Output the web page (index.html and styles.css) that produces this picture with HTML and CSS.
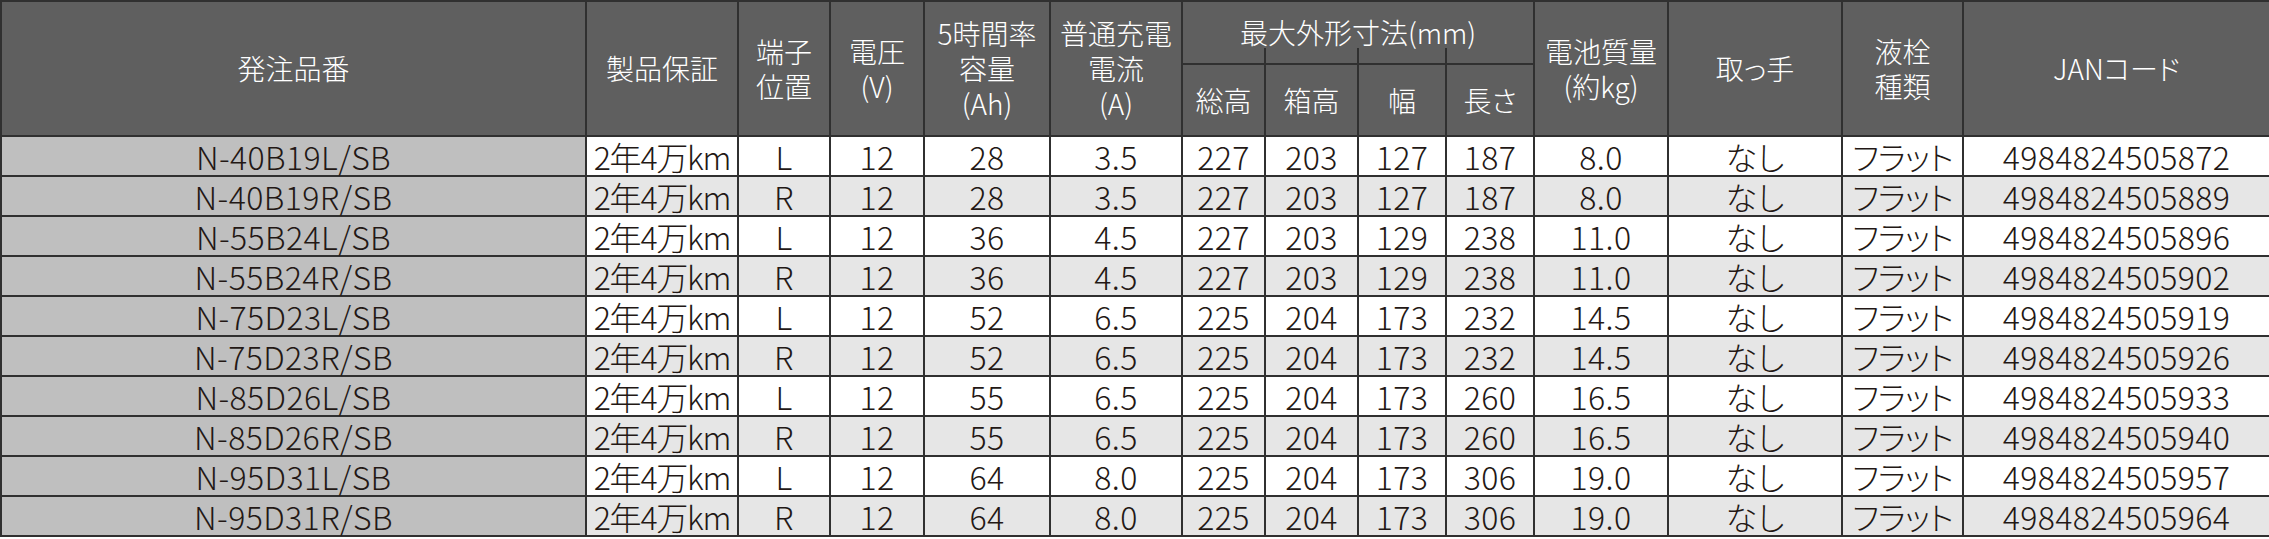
FILE: index.html
```html
<!DOCTYPE html>
<html lang="ja">
<head>
<meta charset="utf-8">
<title>バッテリー仕様表</title>
<link rel="stylesheet" href="styles.css">
</head>
<body>
<table class="spec">
  <colgroup>
    <col class="w-code"><col class="w-warranty"><col class="w-term"><col class="w-volt"><col class="w-cap"><col class="w-cur">
    <col class="w-d1"><col class="w-d2"><col class="w-d3"><col class="w-d4"><col class="w-mass"><col class="w-handle"><col class="w-plug"><col class="w-jan">
  </colgroup>
  <thead>
    <tr class="h1">
      <th rowspan="2">発注品番</th>
      <th rowspan="2">製品保証</th>
      <th rowspan="2">端子<br>位置</th>
      <th rowspan="2">電圧<br>(V)</th>
      <th rowspan="2">5時間率<br>容量<br>(Ah)</th>
      <th rowspan="2">普通充電<br>電流<br>(A)</th>
      <th colspan="4">最大外形寸法(mm)</th>
      <th rowspan="2">電池質量<br>(約kg)</th>
      <th rowspan="2">取っ手</th>
      <th rowspan="2">液栓<br>種類</th>
      <th rowspan="2">JANコード</th>
    </tr>
    <tr class="h2">
      <th class="sub">総高</th>
      <th class="sub tick">箱高</th>
      <th class="sub tick">幅</th>
      <th class="sub tick">長さ</th>
    </tr>
  </thead>
  <tbody>
    <tr><td class="code">N-40B19L/SB</td><td>2年4万km</td><td>L</td><td>12</td><td>28</td><td>3.5</td><td>227</td><td>203</td><td>127</td><td>187</td><td>8.0</td><td>なし</td><td>フラット</td><td>4984824505872</td></tr>
    <tr><td class="code">N-40B19R/SB</td><td>2年4万km</td><td>R</td><td>12</td><td>28</td><td>3.5</td><td>227</td><td>203</td><td>127</td><td>187</td><td>8.0</td><td>なし</td><td>フラット</td><td>4984824505889</td></tr>
    <tr><td class="code">N-55B24L/SB</td><td>2年4万km</td><td>L</td><td>12</td><td>36</td><td>4.5</td><td>227</td><td>203</td><td>129</td><td>238</td><td>11.0</td><td>なし</td><td>フラット</td><td>4984824505896</td></tr>
    <tr><td class="code">N-55B24R/SB</td><td>2年4万km</td><td>R</td><td>12</td><td>36</td><td>4.5</td><td>227</td><td>203</td><td>129</td><td>238</td><td>11.0</td><td>なし</td><td>フラット</td><td>4984824505902</td></tr>
    <tr><td class="code">N-75D23L/SB</td><td>2年4万km</td><td>L</td><td>12</td><td>52</td><td>6.5</td><td>225</td><td>204</td><td>173</td><td>232</td><td>14.5</td><td>なし</td><td>フラット</td><td>4984824505919</td></tr>
    <tr><td class="code">N-75D23R/SB</td><td>2年4万km</td><td>R</td><td>12</td><td>52</td><td>6.5</td><td>225</td><td>204</td><td>173</td><td>232</td><td>14.5</td><td>なし</td><td>フラット</td><td>4984824505926</td></tr>
    <tr><td class="code">N-85D26L/SB</td><td>2年4万km</td><td>L</td><td>12</td><td>55</td><td>6.5</td><td>225</td><td>204</td><td>173</td><td>260</td><td>16.5</td><td>なし</td><td>フラット</td><td>4984824505933</td></tr>
    <tr><td class="code">N-85D26R/SB</td><td>2年4万km</td><td>R</td><td>12</td><td>55</td><td>6.5</td><td>225</td><td>204</td><td>173</td><td>260</td><td>16.5</td><td>なし</td><td>フラット</td><td>4984824505940</td></tr>
    <tr><td class="code">N-95D31L/SB</td><td>2年4万km</td><td>L</td><td>12</td><td>64</td><td>8.0</td><td>225</td><td>204</td><td>173</td><td>306</td><td>19.0</td><td>なし</td><td>フラット</td><td>4984824505957</td></tr>
    <tr><td class="code">N-95D31R/SB</td><td>2年4万km</td><td>R</td><td>12</td><td>64</td><td>8.0</td><td>225</td><td>204</td><td>173</td><td>306</td><td>19.0</td><td>なし</td><td>フラット</td><td>4984824505964</td></tr>
  </tbody>
</table>
</body>
</html>
```
FILE: styles.css
```css
html, body {
  margin: 0;
  padding: 0;
  background: #ffffff;
}

.spec {
  width: 2269px;
  table-layout: fixed;
  border-collapse: collapse;
  font-family: "Noto Sans CJK JP", "Noto Sans", sans-serif;
  font-weight: 300;
  font-feature-settings: "palt";
  color: #231815;
}

.w-code { width: 585px; }
.w-warranty { width: 152px; }
.w-term { width: 92px; }
.w-volt { width: 94px; }
.w-cap { width: 126px; }
.w-cur { width: 132px; }
.w-d1 { width: 83px; }
.w-d2 { width: 93px; }
.w-d3 { width: 88px; }
.w-d4 { width: 88px; }
.w-mass { width: 134px; }
.w-handle { width: 174px; }
.w-plug { width: 121px; }
.w-jan { width: 307px; }

.spec th,
.spec td {
  border: 2px solid #303030;
  padding: 0;
  text-align: center;
  vertical-align: middle;
  white-space: nowrap;
}

.spec th {
  background: #5f5f5f;
  color: #ffffff;
  font-weight: 300;
  font-size: 28px;
  line-height: 35px;
}

.h1 { height: 63px; }
.h2 { height: 72px; }

.spec th.tick {
  position: relative;
}

.spec th.tick::before {
  content: "";
  position: absolute;
  left: -2px;
  top: -17px;
  width: 2px;
  height: 17px;
  background: #303030;
}

.spec td {
  font-size: 32px;
  line-height: 38px;
  height: 38px;
  background: #ffffff;
  letter-spacing: 0.4px;
}

.spec tbody td:nth-child(2) {
  letter-spacing: -1.2px;
}

.spec tbody td:nth-child(13) {
  letter-spacing: -1px;
}

.spec tbody tr:nth-child(even) td {
  background: #e6e6e6;
}

.spec tbody tr td.code {
  background: #bfbfbf;
}
```
